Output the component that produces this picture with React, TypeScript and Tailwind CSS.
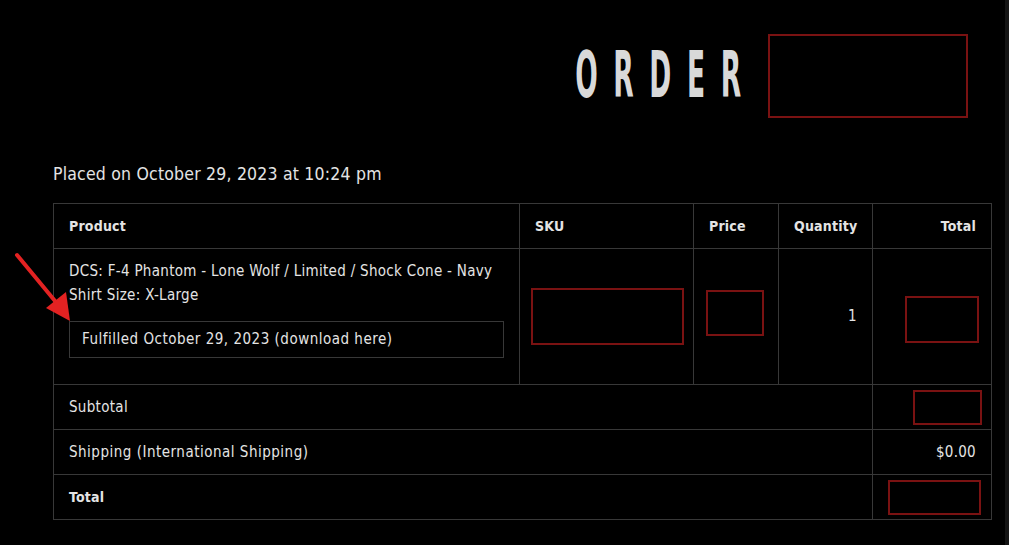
const font = "font-['DejaVu_Sans_Condensed','Liberation_Sans',sans-serif]";

function Redacted({ className }: { className: string }) {
  return <div className={`border-2 border-[#7a1212] ${className}`} />;
}

function Arrow() {
  return (
    <svg className="absolute left-[12px] top-[250px]" width="70" height="80" viewBox="0 0 70 80">
      <line x1="5" y1="5" x2="48" y2="57" stroke="#e32222" strokeWidth="4" strokeLinecap="round" />
      <polygon points="58,71 34,58 54,42" fill="#e32222" />
    </svg>
  );
}

export default function App() {
  const cell = 'border border-[#383838] px-[15px]';
  return (
    <div className={`relative min-h-[545px] w-[1009px] bg-black text-[#e4e4e4] ${font}`}>
      <div className="absolute right-0 top-0 h-full w-[4px] bg-[#141414]" />
      <div className="px-[53px] pt-[34px] pr-[18px]">
        <div className="flex items-start justify-end gap-[27px] pr-[23px]">
          <div className="mt-[6px] flex h-[70px] w-[167px] justify-end">
            <span className="mr-[-16px] shrink-0 origin-right scale-x-[0.46] whitespace-nowrap text-[64px] font-bold leading-[70px] tracking-[34px] text-[#d9d9d9]">
              ORDER
            </span>
          </div>
          <Redacted className="h-[84px] w-[200px]" />
        </div>
        <p className="mt-[46px] text-[17.5px] leading-[20px] tracking-[0.2px]">Placed on October 29, 2023 at 10:24 pm</p>
        <table className="mt-[19px] w-[938px] table-fixed border-collapse text-[15px] tracking-[0.3px]">
          <colgroup>
            <col className="w-[466px]" />
            <col className="w-[174px]" />
            <col className="w-[85px]" />
            <col className="w-[94px]" />
            <col className="w-[119px]" />
          </colgroup>
          <thead>
            <tr className="h-[45px] text-[14px] font-bold tracking-[0.2px]">
              <th className={`${cell} text-left`}>Product</th>
              <th className={`${cell} text-left`}>SKU</th>
              <th className={`${cell} text-left`}>Price</th>
              <th className={`${cell} text-right`}>Quantity</th>
              <th className={`${cell} text-right`}>Total</th>
            </tr>
          </thead>
          <tbody>
            <tr className="h-[136px]">
              <td className={`${cell} h-[136px] align-top pt-[10px]`}>
                <div className="leading-[24px]">DCS: F-4 Phantom - Lone Wolf / Limited / Shock Cone - Navy</div>
                <div className="leading-[24px]">Shirt Size: X-Large</div>
                <div className="mt-[14px] flex h-[37px] items-center border border-[#383838] px-[12px] tracking-[0.5px]">
                  Fulfilled October 29, 2023 (download here)
                </div>
              </td>
              <td className={`${cell} pl-[11px]`}>
                <Redacted className="h-[57px] w-[153px]" />
              </td>
              <td className={`${cell} pl-[12px]`}>
                <Redacted className="mb-[7px] h-[46px] w-[58px]" />
              </td>
              <td className={`${cell} text-right`}>1</td>
              <td className={`${cell} pr-[12px]`}>
                <Redacted className="ml-auto mt-[6px] h-[47px] w-[74px]" />
              </td>
            </tr>
            <tr className="h-[45px]">
              <td className={cell} colSpan={4}>Subtotal</td>
              <td className={`${cell} pr-[9px]`}>
                <Redacted className="ml-auto h-[35px] w-[69px]" />
              </td>
            </tr>
            <tr className="h-[45px]">
              <td className={`${cell} tracking-[0.5px]`} colSpan={4}>Shipping (International Shipping)</td>
              <td className={`${cell} text-right`}>$0.00</td>
            </tr>
            <tr className="h-[45px] font-bold">
              <td className={`${cell} text-[14px] tracking-[0.2px]`} colSpan={4}>Total</td>
              <td className={`${cell} pr-[16px]`}>
                <Redacted className="ml-auto h-[35px] w-[93px]" />
              </td>
            </tr>
          </tbody>
        </table>
      </div>
      <Arrow />
    </div>
  );
}
